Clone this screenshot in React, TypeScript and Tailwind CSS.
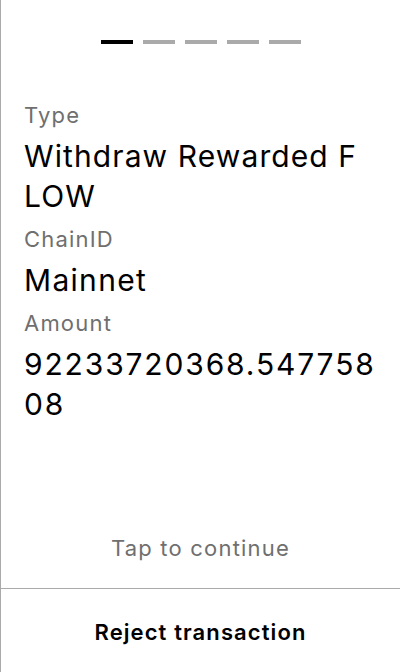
import React from "react";

const font = { fontFamily: "Inter, 'Noto Sans', sans-serif" };

function Field({ label, lines, track }: { label: string; lines: string[]; track: string }) {
  return (
    <div className="flex flex-col">
      <div className="text-[22px] leading-[28px] tracking-[1.2px] text-[#6f6f6f]">{label}</div>
      <div className={"mt-[7px] text-[30px] leading-[40px] text-black " + track}>
        {lines.map((l, i) => (
          <div key={i}>{l}</div>
        ))}
      </div>
    </div>
  );
}

export default function App() {
  return (
    <div className="w-[400px] h-[672px] bg-white border-l border-[#aaaaaa] flex flex-col" style={font}>
      <div className="flex justify-center gap-[10px] pt-[40px]">
        <div className="w-[32px] h-[4px] bg-black" />
        <div className="w-[32px] h-[4px] bg-[#aaaaaa]" />
        <div className="w-[32px] h-[4px] bg-[#aaaaaa]" />
        <div className="w-[32px] h-[4px] bg-[#aaaaaa]" />
        <div className="w-[32px] h-[4px] bg-[#aaaaaa]" />
      </div>
      <div className="flex flex-col gap-[9px] pl-[23px] pr-6 pt-[57px]">
        <Field label="Type" lines={["Withdraw Rewarded F", "LOW"]} track="tracking-[1.1px]" />
        <Field label="ChainID" lines={["Mainnet"]} track="tracking-[1.3px]" />
        <Field label="Amount" lines={["92233720368.547758", "08"]} track="tracking-[1.85px]" />
      </div>
      <div className="flex-1" />
      <div className="text-center text-[22px] leading-[30px] tracking-[1.2px] text-[#6f6f6f] pb-[25px]">
        Tap to continue
      </div>
      <div className="border-t border-[#aaaaaa] h-[84px] pt-[3px] flex items-center justify-center">
        <span className="text-[22px] font-semibold tracking-[1.1px] text-black">Reject transaction</span>
      </div>
    </div>
  );
}
